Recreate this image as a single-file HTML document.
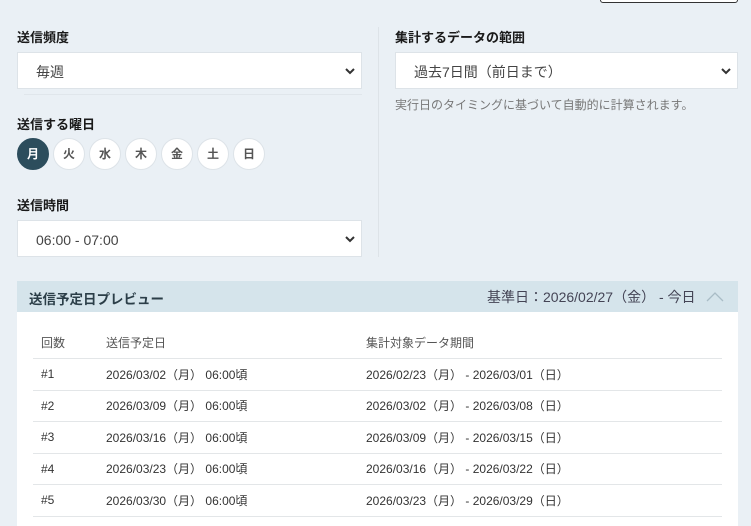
<!DOCTYPE html>
<html><head><meta charset="utf-8"><style>
*{box-sizing:border-box;margin:0;padding:0}
body{width:751px;height:526px;overflow:hidden;background:#eaf0f5;font-family:"Liberation Sans","Noto Sans CJK JP",sans-serif;color:#222;position:relative}
.a{position:absolute}
.lbl{font-size:13px;font-weight:bold;color:#1a1a1a}
.sel{background:#fff;border:1px solid #dde3e8;height:37px;font-size:14px;color:#444;padding-left:18px;line-height:38px}
.sel svg{position:absolute;right:6px;top:15px}
.c{width:32px;height:32px;border-radius:50%;background:#fff;border:1px solid #dde3e8;font-size:12px;font-weight:bold;color:#555;text-align:center;line-height:30px;top:138px}
table{border-collapse:collapse;font-size:12px;color:#333}
td{height:31.5px;border-bottom:1px solid #e3e6e8;padding:0 0 0 8px;white-space:nowrap}
</style></head><body>
<div class="a" style="left:600px;top:-4px;width:138px;height:7px;border:1px solid #333;border-radius:3px;background:#fff"></div>
<div class="a lbl" style="left:17px;top:27px">送信頻度</div>
<div class="a sel" style="left:17px;top:52px;width:345px">毎週<svg width="10" height="7" viewBox="0 0 10 7"><path d="M1 1l4 4 4-4" stroke="#333" stroke-width="2" fill="none"/></svg></div>
<div class="a" style="left:24px;top:94px;width:338px;height:1px;background:#e0e6eb"></div>
<div class="a lbl" style="left:17px;top:114px">送信する曜日</div>
<div class="a c" style="left:17px;background:#2c4d5c;border-color:#2c4d5c;color:#fff">月</div>
<div class="a c" style="left:53px">火</div>
<div class="a c" style="left:89px">水</div>
<div class="a c" style="left:125px">木</div>
<div class="a c" style="left:161px">金</div>
<div class="a c" style="left:197px">土</div>
<div class="a c" style="left:233px">日</div>
<div class="a lbl" style="left:17px;top:195px">送信時間</div>
<div class="a sel" style="left:17px;top:220px;width:345px">06:00 - 07:00<svg width="10" height="7" viewBox="0 0 10 7"><path d="M1 1l4 4 4-4" stroke="#333" stroke-width="2" fill="none"/></svg></div>
<div class="a" style="left:378px;top:27px;width:1px;height:230px;background:#dde3e8"></div>
<div class="a lbl" style="left:395px;top:27px">集計するデータの範囲</div>
<div class="a sel" style="left:395px;top:52px;width:343px">過去7日間（前日まで）<svg width="10" height="7" viewBox="0 0 10 7"><path d="M1 1l4 4 4-4" stroke="#333" stroke-width="2" fill="none"/></svg></div>
<div class="a" style="left:395px;top:96px;font-size:12px;color:#777">実行日のタイミングに基づいて自動的に計算されます。</div>
<div class="a" style="left:17px;top:281px;width:721px;height:31px;background:#d5e4eb"></div>
<div class="a" style="left:29px;top:288px;font-size:13.5px;font-weight:bold;color:#2b3e48">送信予定日プレビュー</div>
<div class="a" style="left:487px;top:287px;font-size:14px;color:#445">基準日：2026/02/27（金） - 今日</div>
<svg class="a" style="left:706px;top:291px" width="18" height="11" viewBox="0 0 18 11"><path d="M1 10l8-8 8 8" stroke="#a9bcc6" stroke-width="1.3" fill="none"/></svg>
<div class="a" style="left:17px;top:312px;width:721px;height:214px;background:#fff"></div>
<table class="a" style="left:33px;top:327px;width:689px">
<tr><td style="width:65px;color:#555">回数</td><td style="width:260px;color:#555">送信予定日</td><td style="color:#555">集計対象データ期間</td></tr>
<tr><td>#1</td><td>2026/03/02（月） 06:00頃</td><td>2026/02/23（月） - 2026/03/01（日）</td></tr>
<tr><td>#2</td><td>2026/03/09（月） 06:00頃</td><td>2026/03/02（月） - 2026/03/08（日）</td></tr>
<tr><td>#3</td><td>2026/03/16（月） 06:00頃</td><td>2026/03/09（月） - 2026/03/15（日）</td></tr>
<tr><td>#4</td><td>2026/03/23（月） 06:00頃</td><td>2026/03/16（月） - 2026/03/22（日）</td></tr>
<tr><td>#5</td><td>2026/03/30（月） 06:00頃</td><td>2026/03/23（月） - 2026/03/29（日）</td></tr>
</table>
</body></html>
